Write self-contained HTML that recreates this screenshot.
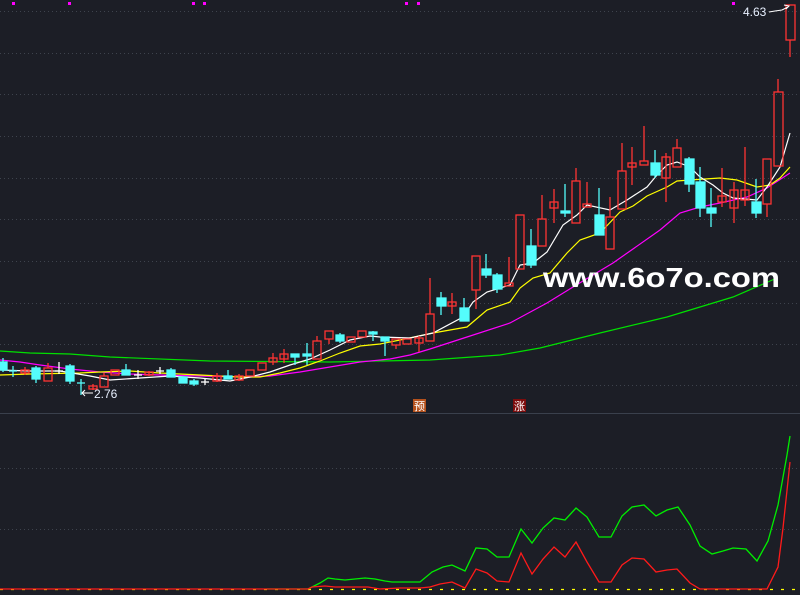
<!DOCTYPE html>
<html><head><meta charset="utf-8"><style>
html,body{margin:0;padding:0;background:#1c1e26;width:800px;height:595px;overflow:hidden}
svg{display:block}
</style></head><body>
<svg width="800" height="595" viewBox="0 0 800 595" xmlns="http://www.w3.org/2000/svg">
<rect width="800" height="595" fill="#1c1e26"/>
<g stroke="#3e434d" stroke-width="1" stroke-dasharray="1,3">
<line x1="0" y1="11.5" x2="800" y2="11.5"/><line x1="0" y1="53.5" x2="800" y2="53.5"/>
<line x1="0" y1="94.5" x2="800" y2="94.5"/><line x1="0" y1="136.5" x2="800" y2="136.5"/>
<line x1="0" y1="178.5" x2="800" y2="178.5"/><line x1="0" y1="219.5" x2="800" y2="219.5"/>
<line x1="0" y1="261.5" x2="800" y2="261.5"/><line x1="0" y1="303.5" x2="800" y2="303.5"/>
<line x1="0" y1="344.5" x2="800" y2="344.5"/><line x1="0" y1="385.5" x2="800" y2="385.5"/>
<line x1="0" y1="468.5" x2="800" y2="468.5"/><line x1="0" y1="529.5" x2="800" y2="529.5"/>
</g>
<line x1="0" y1="413.5" x2="800" y2="413.5" stroke="#3a404c" stroke-width="1"/>
<g fill="#ff00ff">
<rect x="12" y="2" width="3" height="3"/><rect x="68" y="2" width="3" height="3"/><rect x="192" y="2" width="3" height="3"/><rect x="203" y="2" width="3" height="3"/><rect x="405" y="2" width="3" height="3"/><rect x="417" y="2" width="3" height="3"/><rect x="732" y="2" width="3" height="3"/>
</g>
<!-- MAs -->
<g fill="none" stroke-width="1.2">
<polyline stroke="#00e000" points="0,351 30,353 70,354 110,357 210,361 330,362 430,360 500,355 540,348 600,333 667,317 733,297 777,278"/>
<polyline stroke="#ff00ff" points="0,360 20,362 40,365 70,369 100,372 130,374 160,375 200,376 240,377 270,376 300,372 330,367 360,362 390,359 410,355 430,349 467,337 510,323 547,303 573,287 613,263 660,230 680,213 700,207 720,203 747,197 767,188 790,173"/>
<polyline stroke="#ffff00" points="0,375 30,374 80,373 100,372 130,371 160,373 200,375 240,377 260,377 280,373 300,368 320,361 340,353 360,346 380,344 400,340 433,333 467,327 487,310 510,302 520,288 533,278 550,273 567,253 580,240 600,233 620,212 633,206 647,196 667,187 677,181 690,180 720,178 737,180 757,187 770,185 780,178 790,167"/>
<polyline stroke="#ffffff" points="0,370 30,371 60,371 90,376 110,380 140,378 170,376 200,378 230,381 250,377 270,372 290,365 310,359 330,350 350,340 370,336 380,337 410,338 433,333 463,317 473,302 487,292 510,285 520,265 533,263 547,252 563,225 577,215 587,205 610,210 627,200 647,187 657,175 667,165 677,162 690,167 700,177 713,185 723,193 733,198 757,200 767,187 780,167 790,133"/>
</g>
<!-- candles -->
<g stroke-width="1.3">
<g stroke="#54fcfc" fill="#54fcfc">
<line x1="3" y1="358" x2="3" y2="372"/><rect x="-1" y="362" width="8" height="8"/>
<line x1="13" y1="366" x2="13" y2="377"/><line x1="9" y1="371" x2="17" y2="371"/>
<line x1="36" y1="366" x2="36" y2="383"/><rect x="32" y="368" width="8" height="11"/>
<line x1="70" y1="364" x2="70" y2="384"/><rect x="66" y="366" width="8" height="15"/>
<line x1="81" y1="379" x2="81" y2="395"/><line x1="77" y1="383" x2="85" y2="383"/>
<line x1="126" y1="364" x2="126" y2="375"/><rect x="122" y="370" width="8" height="5"/>
<line x1="171" y1="368" x2="171" y2="377"/><rect x="167" y="370" width="8" height="7"/>
<rect x="179" y="377" width="8" height="6"/>
<line x1="194" y1="379" x2="194" y2="386"/><rect x="190" y="381" width="8" height="3"/>
<line x1="228" y1="370" x2="228" y2="379"/><rect x="224" y="376" width="8" height="3"/>
<line x1="295" y1="354" x2="295" y2="365"/><rect x="291" y="354" width="8" height="3"/>
<line x1="307" y1="343" x2="307" y2="365"/><rect x="303" y="354" width="8" height="2"/>
<line x1="340" y1="333" x2="340" y2="343"/><rect x="336" y="335" width="8" height="6"/>
<line x1="373" y1="331" x2="373" y2="341"/><rect x="369" y="332" width="8" height="2"/>
<line x1="385" y1="337" x2="385" y2="356"/><rect x="381" y="337" width="8" height="4"/>
<line x1="441" y1="292" x2="441" y2="315"/><rect x="437" y="298" width="9" height="8"/>
<line x1="464" y1="298" x2="464" y2="321"/><rect x="460" y="308" width="9" height="13"/>
<line x1="486" y1="254" x2="486" y2="278"/><rect x="482" y="269" width="9" height="6"/>
<line x1="497" y1="273" x2="497" y2="293"/><rect x="493" y="275" width="9" height="14"/>
<line x1="531" y1="229" x2="531" y2="268"/><rect x="527" y="246" width="9" height="19"/>
<line x1="565" y1="184" x2="565" y2="217"/><rect x="561" y="211" width="9" height="2"/>
<line x1="599" y1="188" x2="599" y2="235"/><rect x="595" y="215" width="9" height="20"/>
<line x1="655" y1="150" x2="655" y2="178"/><rect x="651" y="163" width="9" height="12"/>
<line x1="689" y1="157" x2="689" y2="192"/><rect x="685" y="159" width="9" height="25"/>
<line x1="700" y1="167" x2="700" y2="217"/><rect x="696" y="182" width="9" height="26"/>
<line x1="711" y1="188" x2="711" y2="227"/><rect x="707" y="208" width="9" height="5"/>
<line x1="756" y1="179" x2="756" y2="218"/><rect x="752" y="202" width="9" height="11"/>
</g>
<g stroke="#ffffff" fill="none">
<line x1="59" y1="362" x2="59" y2="374"/><line x1="55" y1="371" x2="63" y2="371"/>
<line x1="138" y1="370" x2="138" y2="379"/><line x1="134" y1="375" x2="142" y2="375"/>
<line x1="160" y1="367" x2="160" y2="374"/><line x1="156" y1="371" x2="164" y2="371"/>
<line x1="205" y1="379" x2="205" y2="385"/><line x1="201" y1="382" x2="209" y2="382"/>
</g>
<g stroke="#ff3333" fill="none">
<line x1="25" y1="367" x2="25" y2="375"/><rect x="21" y="370" width="8" height="3"/>
<line x1="48" y1="363" x2="48" y2="368"/><rect x="44" y="368" width="8" height="13"/>
<line x1="93" y1="384" x2="93" y2="390"/><rect x="89" y="386" width="8" height="3"/>
<line x1="104" y1="373" x2="104" y2="376"/><rect x="100" y="376" width="8" height="11"/>
<rect x="111" y="370" width="8" height="5"/>
<line x1="149" y1="371" x2="149" y2="376"/><rect x="145" y="372" width="8" height="3"/>
<line x1="217" y1="373" x2="217" y2="382"/><rect x="213" y="376" width="8" height="5"/>
<line x1="239" y1="374" x2="239" y2="381"/><rect x="235" y="376" width="8" height="4"/>
<rect x="246" y="370" width="8" height="6"/>
<rect x="258" y="363" width="8" height="7"/>
<line x1="273" y1="353" x2="273" y2="365"/><rect x="269" y="358" width="8" height="4"/>
<line x1="284" y1="349" x2="284" y2="363"/><rect x="280" y="354" width="8" height="5"/>
<line x1="317" y1="336" x2="317" y2="341"/><rect x="313" y="341" width="8" height="18"/>
<line x1="329" y1="339" x2="329" y2="344"/><rect x="325" y="331" width="8" height="8"/>
<rect x="347" y="337" width="8" height="5"/>
<rect x="358" y="331" width="8" height="6"/>
<line x1="396" y1="345" x2="396" y2="349"/><rect x="392" y="339" width="8" height="6"/>
<rect x="403" y="339" width="8" height="5"/>
<line x1="419" y1="336" x2="419" y2="352"/><rect x="415" y="338" width="8" height="5"/>
<line x1="430" y1="278" x2="430" y2="314"/><rect x="426" y="314" width="8" height="27"/>
<line x1="452" y1="293" x2="452" y2="314"/><rect x="448" y="302" width="8" height="4"/>
<line x1="476" y1="290" x2="476" y2="309"/><rect x="472" y="256" width="8" height="34"/>
<line x1="509" y1="257" x2="509" y2="283"/><rect x="505" y="283" width="8" height="3"/>
<rect x="516" y="215" width="8" height="54"/>
<line x1="542" y1="195" x2="542" y2="219"/><rect x="538" y="219" width="8" height="27"/>
<line x1="554" y1="189" x2="554" y2="223"/><rect x="550" y="202" width="8" height="6"/>
<line x1="576" y1="168" x2="576" y2="181"/><rect x="572" y="181" width="8" height="42"/>
<line x1="587" y1="182" x2="587" y2="204"/><rect x="583" y="204" width="8" height="3"/>
<line x1="610" y1="197" x2="610" y2="217"/><rect x="606" y="217" width="8" height="32"/>
<line x1="622" y1="143" x2="622" y2="171"/><rect x="618" y="171" width="8" height="38"/>
<line x1="632" y1="147" x2="632" y2="185"/><rect x="628" y="163" width="8" height="4"/>
<line x1="644" y1="126" x2="644" y2="161"/><rect x="640" y="161" width="8" height="4"/>
<line x1="666" y1="153" x2="666" y2="202"/><rect x="662" y="157" width="8" height="21"/>
<line x1="677" y1="139" x2="677" y2="148"/><rect x="673" y="148" width="8" height="19"/>
<line x1="722" y1="168" x2="722" y2="207"/><rect x="718" y="196" width="8" height="6"/>
<line x1="734" y1="182" x2="734" y2="223"/><rect x="730" y="190" width="8" height="18"/>
<line x1="745" y1="147" x2="745" y2="206"/><rect x="741" y="190" width="8" height="10"/>
<line x1="767" y1="204" x2="767" y2="217"/><rect x="763" y="159" width="8" height="45"/>
<line x1="778" y1="79" x2="778" y2="92"/><rect x="774" y="92" width="9" height="74"/>
<line x1="790" y1="40" x2="790" y2="57"/><rect x="786" y="5" width="9" height="35"/>
</g>
</g>
<!-- labels -->
<text x="94" y="398" font-family="Liberation Sans, sans-serif" font-size="12" fill="#e8f0ff">2.76</text>
<polyline points="93,393 82,393 84,391 M" fill="none" stroke="#fff" stroke-width="1"/>
<line x1="82" y1="393" x2="92" y2="393" stroke="#fff"/><line x1="82" y1="393" x2="85" y2="390" stroke="#fff"/><line x1="82" y1="393" x2="85" y2="396" stroke="#fff"/>
<text x="743" y="16" font-family="Liberation Sans, sans-serif" font-size="12" fill="#e8f0ff">4.63</text>
<polyline points="769,12 775,11 782,10 788,7" fill="none" stroke="#fff" stroke-width="1"/>
<polyline points="784,5 789,6 786,9" fill="none" stroke="#fff" stroke-width="1"/>
<text x="543" y="287" font-family="Liberation Sans, DejaVu Sans, sans-serif" font-weight="bold" font-size="28" fill="#ffffff" textLength="237" lengthAdjust="spacingAndGlyphs">www.6o7o.com</text>
<rect x="413" y="399" width="13" height="13" fill="#b4511c"/>
<text x="419.5" y="410" text-anchor="middle" font-family="Noto Sans CJK SC, sans-serif" font-size="11" fill="#fff">预</text>
<rect x="513" y="399" width="13" height="13" fill="#7d0c0c"/>
<text x="519.5" y="410" text-anchor="middle" font-family="Noto Sans CJK SC, sans-serif" font-size="11" fill="#fff">涨</text>
<!-- lower panel -->
<line x1="0" y1="589.5" x2="800" y2="589.5" stroke="#ffff00" stroke-width="1.2" stroke-dasharray="3,8"/>
<g fill="none" stroke-width="1.3">
<polyline stroke="#00ee00" points="267,589 308,589 312,587 320,583 328,578 335,579 345,580 355,579 365,578 375,579 385,581 392,582 400,582 420,582 432,572 443,567 452,565 465,571 476,548 487,549 497,557 509,557 521,529 532,543 543,528 554,518 565,520 576,508 587,517 599,537 611,537 622,516 632,507 644,505 656,516 667,510 678,507 690,525 700,546 712,554 723,551 733,548 746,549 757,561 768,541 778,505 787,455 790,436"/>
<polyline stroke="#ff1a1a" points="0,589 308,589 312,587 325,586 335,587 368,587 380,589 400,588 420,588 430,587 440,584 452,582 465,588 476,569 487,573 497,581 509,582 521,553 532,574 543,559 554,547 565,557 576,542 587,562 599,582 611,582 622,565 632,558 644,559 656,572 667,570 677,569 690,583 700,589 767,589 778,567 783,528 790,462"/>
</g>
</svg>
</body></html>
